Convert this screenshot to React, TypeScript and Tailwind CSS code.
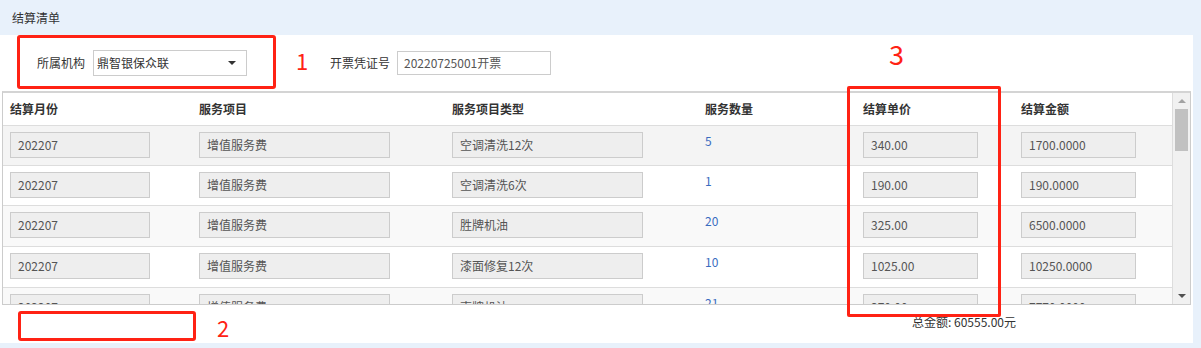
import React from 'react';

type Row = { month: string; item: string; type: string; qty: string; price: string; amount: string };

const rows: Row[] = [
  { month: '202207', item: '增值服务费', type: '空调清洗12次', qty: '5', price: '340.00', amount: '1700.0000' },
  { month: '202207', item: '增值服务费', type: '空调清洗6次', qty: '1', price: '190.00', amount: '190.0000' },
  { month: '202207', item: '增值服务费', type: '胜牌机油', qty: '20', price: '325.00', amount: '6500.0000' },
  { month: '202207', item: '增值服务费', type: '漆面修复12次', qty: '10', price: '1025.00', amount: '10250.0000' },
  { month: '202207', item: '增值服务费', type: '壳牌机油', qty: '21', price: '370.00', amount: '7770.0000' },
];

const cols = 'grid grid-cols-[189px_253px_253px_158px_158px_1fr]';
const heights = ['h-[40px]', 'h-[40px]', 'h-[41px]', 'h-[41px]', 'h-[40px]'];
const bgs = ['bg-[#f4f4f4]', 'bg-white', 'bg-[#f9f9f9]', 'bg-white', 'bg-[#f9f9f9]'];

const Cell: React.FC<{ value: string; w: string }> = ({ value, w }) => (
  <div className={`${w} h-[26px] border border-[#ccc] bg-[#eeeeee] px-[7px] flex items-center text-[12px] text-[#555]`}>
    {value}
  </div>
);

export default function App() {
  return (
    <div
      className="relative w-[1201px] h-[348px] overflow-hidden bg-[#e8f1fb] text-[#333]"
      style={{ fontFamily: '"Noto Sans CJK SC", "Noto Sans", sans-serif' }}
    >
      <div className="h-[35px] pl-[12px] flex items-center text-[12px] text-[#333]">结算清单</div>

      <div className="w-[1193px] h-[308px] bg-white flex flex-col">
        {/* filter row */}
        <div className="h-[56px] flex items-center text-[12px]">
          <span className="ml-[37px] w-[56px]">所属机构</span>
          <div className="w-[154px] h-[26px] border border-[#ccc] flex items-center justify-between pl-[3px] pr-[10px]">
            <span className="text-[12px] text-[#333]">鼎智银保众联</span>
            <span className="w-0 h-0 border-l-[4px] border-r-[4px] border-t-[4px] border-l-transparent border-r-transparent border-t-[#333]" />
          </div>
          <span className="ml-[83px] w-[67px]">开票凭证号</span>
          <div className="w-[154px] h-[24px] border border-[#ccc] flex items-center px-[6px] text-[12px] text-[#555]">
            20220725001开票
          </div>
        </div>

        {/* table */}
        <div className="ml-[2px] w-[1189px] h-[214px] border border-[#ccc] border-t-2 border-t-[#d4d4d4] flex overflow-hidden">
          <div className="flex-1 overflow-hidden">
            <div className={`${cols} h-[33px] border-b border-[#ddd] items-center text-[12px] font-bold text-[#333]`}>
              {['结算月份', '服务项目', '服务项目类型', '服务数量', '结算单价', '结算金额'].map((h) => (
                <div key={h} className="pl-[7px]">{h}</div>
              ))}
            </div>
            {rows.map((r, i) => (
              <div
                key={i}
                className={`${cols} ${heights[i]} ${bgs[i]} border-b border-[#ddd] items-start pt-[6px]`}
              >
                <div className="pl-[7px]"><Cell value={r.month} w="w-[140px]" /></div>
                <div className="pl-[7px]"><Cell value={r.item} w="w-[191px]" /></div>
                <div className="pl-[7px]"><Cell value={r.type} w="w-[191px]" /></div>
                <div className="pl-[7px] pt-[1px] text-[12px] leading-[16px] text-[#3a6cc0]">{r.qty}</div>
                <div className="pl-[7px]"><Cell value={r.price} w="w-[115px]" /></div>
                <div className="pl-[7px]"><Cell value={r.amount} w="w-[115px]" /></div>
              </div>
            ))}
          </div>
          {/* scrollbar */}
          <div className="w-[18px] border-l border-[#ddd] bg-[#f1f1f1] flex flex-col items-center">
            <span className="mt-[6px] w-0 h-0 border-l-[4px] border-r-[4px] border-b-[4px] border-l-transparent border-r-transparent border-b-[#a3a3a3]" />
            <div className="mt-[6px] w-[13px] h-[42px] bg-[#c1c1c1]" />
            <div className="flex-1" />
            <span className="mb-[6px] w-0 h-0 border-l-[4px] border-r-[4px] border-t-[4px] border-l-transparent border-r-transparent border-t-[#505050]" />
          </div>
        </div>

        {/* footer */}
        <div className="flex-1 flex items-center pl-[912px] pb-[4px] text-[12px] text-[#333]">总金额: 60555.00元</div>
      </div>

      {/* annotations */}
      <div className="absolute left-[17px] top-[35px] w-[259px] h-[54px] border-[3px] border-[#ff2214] rounded-[3px]" />
      <div className="absolute left-[296px] top-[45px] text-[22px] leading-[30px] text-[#ff2214]">1</div>
      <div className="absolute left-[889px] top-[38px] text-[27px] leading-[32px] text-[#ff2214]">3</div>
      <div className="absolute left-[847px] top-[86px] w-[154px] h-[231px] border-[3px] border-[#ff2214] rounded-[2px]" />
      <div className="absolute left-[18px] top-[311px] w-[178px] h-[30px] border-[3px] border-[#ff2214] rounded-[3px]" />
      <div className="absolute left-[217px] top-[312px] text-[22px] leading-[30px] text-[#ff2214]">2</div>
    </div>
  );
}
